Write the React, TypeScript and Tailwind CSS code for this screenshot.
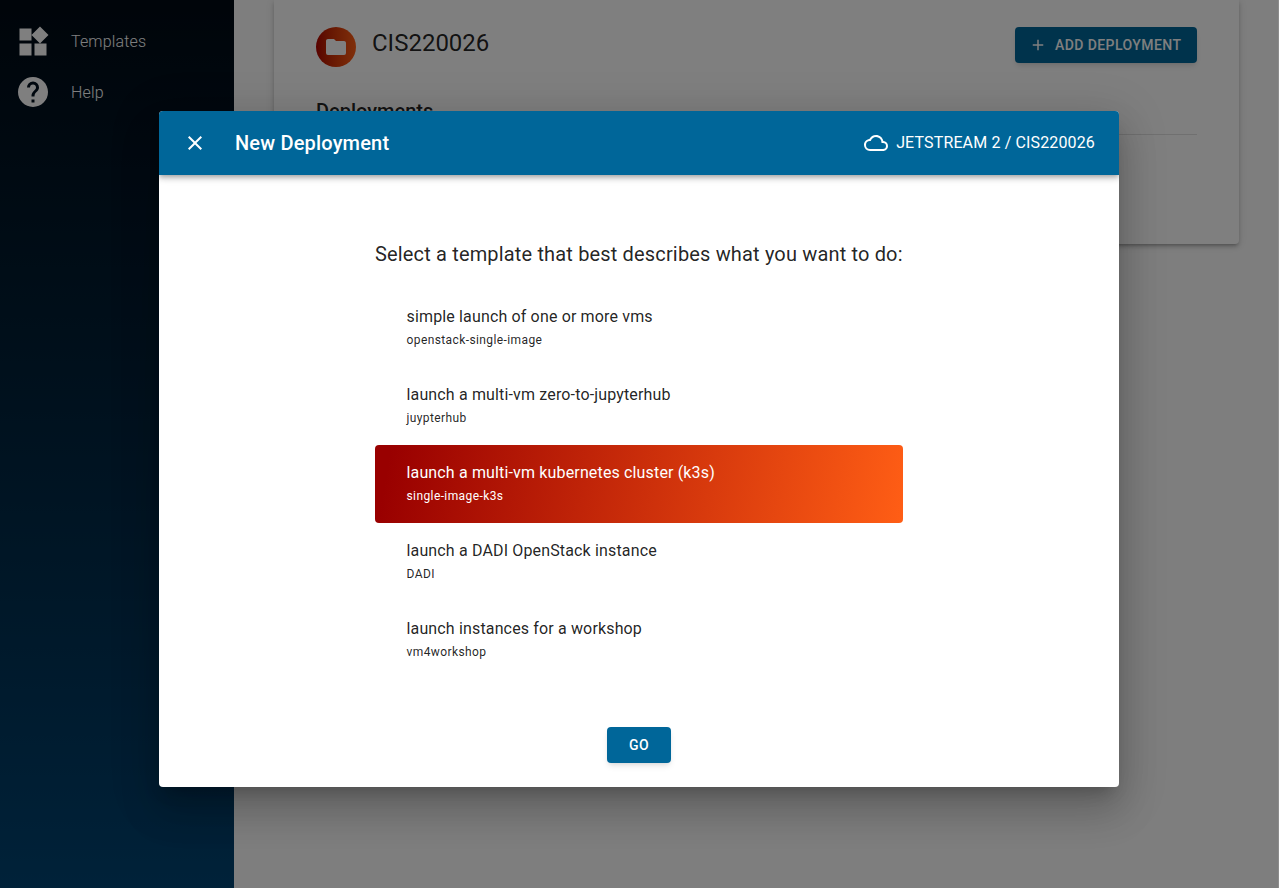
const TEMPLATES = [
  { title: "simple launch of one or more vms", name: "openstack-single-image" },
  { title: "launch a multi-vm zero-to-jupyterhub", name: "juypterhub" },
  { title: "launch a multi-vm kubernetes cluster (k3s)", name: "single-image-k3s", selected: true },
  { title: "launch a DADI OpenStack instance", name: "DADI" },
  { title: "launch instances for a workshop", name: "vm4workshop" },
]

function Icon({ d, className }: { d: string; className?: string }) {
  return (
    <svg viewBox="0 0 24 24" fill="currentColor" className={className}>
      <path d={d} />
    </svg>
  )
}

const WIDGETS = "M13 13v8h8v-8h-8zM3 21h8v-8H3v8zM3 3v8h8V3H3zm13.66-1.31L11 7.34 16.66 13l5.66-5.66-5.66-5.65z"
const HELP =
  "M15.07,11.25L14.17,12.17C13.45,12.89 13,13.5 13,15H11V14.5C11,13.39 11.45,12.39 12.17,11.67L13.41,10.41C13.78,10.05 14,9.55 14,9C14,7.89 13.1,7 12,7A2,2 0 0,0 10,9H8A4,4 0 0,1 12,5A4,4 0 0,1 16,9C16,9.88 15.64,10.67 15.07,11.25M13,19H11V17H13M12,2A10,10 0 0,0 2,12A10,10 0 0,0 12,22A10,10 0 0,0 22,12C22,6.47 17.5,2 12,2Z"
const CLOSE = "M19,6.41L17.59,5L12,10.59L6.41,5L5,6.41L10.59,12L5,17.59L6.41,19L12,13.41L17.59,19L19,17.59L13.41,12L19,6.41Z"
const CLOUD =
  "M19,18H6A4,4 0 0,1 2,14A4,4 0 0,1 6,10H6.71C7.37,7.69 9.5,6 12,6A5.5,5.5 0 0,1 17.5,11.5V12H19A3,3 0 0,1 22,15A3,3 0 0,1 19,18M19.35,10.03C18.67,6.59 15.64,4 12,4C9.11,4 6.6,5.64 5.35,8.03C2.34,8.36 0,10.9 0,14A6,6 0 0,0 6,20H19C21.76,20 24,17.76 24,15C24,12.36 21.95,10.22 19.35,10.03Z"
const FOLDER = "M10,4H4C2.89,4 2,4.89 2,6V18A2,2 0 0,0 4,20H20A2,2 0 0,0 22,18V8C22,6.89 21.1,6 20,6H12L10,4Z"
const PLUS = "M19,13H13V19H11V13H5V11H11V5H13V11H19V13Z"

function Sidebar() {
  return (
    <aside className="w-[234px] shrink-0 bg-gradient-to-b from-[#000a14] to-[#004473] pt-[24px] pl-[15px] text-white">
      <div className="flex h-[50px] items-start">
        <Icon d={WIDGETS} className="h-9 w-9" />
        <span className="ml-[20px] mt-[8px] text-[16px] font-light leading-[20px] tracking-[0.15px]">Templates</span>
      </div>
      <div className="flex h-[50px] items-start">
        <Icon d={HELP} className="h-9 w-9" />
        <span className="ml-[20px] mt-[9px] text-[16px] font-light leading-[20px] tracking-[0.15px]">Help</span>
      </div>
    </aside>
  )
}

function ProjectCard() {
  return (
    <div className="ml-[40px] mr-[40px] h-[244px] rounded-b bg-white px-[42px] pt-[27px] shadow-[0_3px_3px_-2px_rgba(0,0,0,0.2),0_3px_4px_0_rgba(0,0,0,0.14),0_1px_8px_0_rgba(0,0,0,0.12)]">
      <div className="flex items-start justify-between">
        <div className="flex items-start">
          <div className="flex h-10 w-10 items-center justify-center rounded-full bg-gradient-to-r from-[#b00000] to-[#ff5e15]">
            <Icon d={FOLDER} className="h-6 w-6 text-white" />
          </div>
          <h1 className="ml-4 text-[24px] leading-[32px] text-black/87">CIS220026</h1>
        </div>
        <button className="flex h-9 w-[182px] items-center rounded bg-[#006699] pl-[14px] text-[14px] font-medium tracking-[0.42px] text-white shadow-md">
          <Icon d={PLUS} className="mr-[8px] h-[18px] w-[18px]" />
          ADD DEPLOYMENT
        </button>
      </div>
      <h2 className="mt-[28px] text-[20px] font-medium leading-[32px] text-black/87">Deployments</h2>
      <div className="mt-[7px] border-t border-black/12" />
    </div>
  )
}

function TemplateRow({ title, name, selected }: { title: string; name: string; selected?: boolean }) {
  return (
    <div
      className={
        selected
          ? "flex h-[78px] flex-col justify-center rounded bg-[linear-gradient(100deg,#990000_3%,#ff5e15_100%)] pl-[31.5px] text-white"
          : "flex h-[78px] flex-col justify-center rounded pl-[31.5px] text-black/87"
      }
    >
      <div className="text-[16px] leading-[20px] tracking-[0.15px]">{title}</div>
      <div className="mt-[4px] text-[12px] leading-[18px] tracking-[0.4px]">{name}</div>
    </div>
  )
}

function NewDeploymentDialog() {
  return (
    <div className="absolute inset-0 flex items-start justify-center bg-black/50 pt-[111px]">
      <div className="mr-[1px] flex h-[676px] w-[960px] flex-col overflow-hidden rounded bg-white shadow-[0_11px_15px_-7px_rgba(0,0,0,0.2),0_24px_38px_3px_rgba(0,0,0,0.14),0_9px_46px_8px_rgba(0,0,0,0.12)]">
        <header className="flex h-16 shrink-0 items-center bg-[#006699] pl-[24px] pr-[24px] text-white shadow-[0_2px_4px_-1px_rgba(0,0,0,0.2),0_4px_5px_0_rgba(0,0,0,0.14),0_1px_10px_0_rgba(0,0,0,0.12)]">
          <Icon d={CLOSE} className="h-6 w-6" />
          <h2 className="ml-[28px] text-[20px] font-medium leading-[32px] tracking-[0.18px]">New Deployment</h2>
          <div className="ml-auto flex items-center">
            <Icon d={CLOUD} className="mr-[8px] h-6 w-6" />
            <span className="text-[16px] tracking-[0.14px]">JETSTREAM 2 / CIS220026</span>
          </div>
        </header>
        <div className="mx-auto flex w-[528px] flex-1 flex-col">
          <p className="mt-[63px] whitespace-nowrap text-[20px] leading-[32px] tracking-[0.16px] text-black/87">
            Select a template that best describes what you want to do:
          </p>
          <div className="mt-[19px]">
            {TEMPLATES.map((t) => (
              <TemplateRow key={t.name} title={t.title} name={t.name} selected={t.selected} />
            ))}
          </div>
          <button className="mx-auto mt-[48px] h-9 w-16 rounded bg-[#006699] text-[14px] font-medium tracking-[0.5px] text-white shadow-md">
            GO
          </button>
        </div>
      </div>
    </div>
  )
}

export default function App() {
  return (
    <div className="relative flex h-[888px] w-[1279px] overflow-hidden bg-[#fcfcfc] font-['Roboto',sans-serif]">
      <Sidebar />
      <main className="flex-1">
        <ProjectCard />
      </main>
      <NewDeploymentDialog />
      <div className="absolute inset-y-0 right-0 w-px bg-[#8c8c8c]" />
    </div>
  )
}
